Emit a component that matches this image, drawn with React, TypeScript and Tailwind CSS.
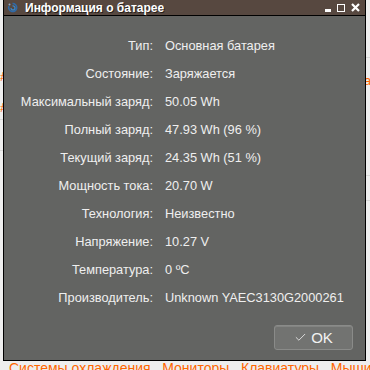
import { Check } from "lucide-react"

const rows: [string, string][] = [
  ["Тип:", "Основная батарея"],
  ["Состояние:", "Заряжается"],
  ["Максимальный заряд:", "50.05 Wh"],
  ["Полный заряд:", "47.93 Wh (96 %)"],
  ["Текущий заряд:", "24.35 Wh (51 %)"],
  ["Мощность тока:", "20.70 W"],
  ["Технология:", "Неизвестно"],
  ["Напряжение:", "10.27 V"],
  ["Температура:", "0 ºC"],
  ["Производитель:", "Unknown YAEC3130G2000261"],
]

const AppIcon = () => (
  <svg width="11" height="12" viewBox="0 0 11 12">
    <path d="M5.5 1.5 A4 4 0 1 1 2 4" fill="none" stroke="#2f6aa8" strokeWidth="1.6" />
    <path d="M5.5 4 A2 2 0 1 1 4 6" fill="none" stroke="#3d88c9" strokeWidth="1.2" />
    <circle cx="2.5" cy="2.5" r="1" fill="#8aa6c4" />
  </svg>
)

const BatteryDialog = () => {
  return (
    <div className="absolute left-[3px] top-0 w-[363px] h-[361px] flex flex-col border-x border-b border-black bg-[#636462]">
      {/* title bar */}
      <div className="h-[16px] bg-[#574840] border-b border-black flex items-center pl-[3px] pr-[5px]">
        <AppIcon />
        <div className="ml-[7px] text-[12px] font-bold text-white [text-shadow:1px_1px_0_#2a211c] leading-none">
          Информация о батарее
        </div>
        <div className="ml-auto flex items-center gap-[5px]">
          <div className="w-[6px] h-[3px] bg-white mt-[6px]" />
          <div className="w-[8px] h-[8px] border-[1.5px] border-white ml-[1px]" />
          <svg width="9" height="9" viewBox="0 0 9 9" className="ml-[1px]">
            <path d="M1 1 L8 8 M8 1 L1 8" stroke="white" strokeWidth="2.2" />
          </svg>
        </div>
      </div>

      <div className="flex-1 flex flex-col pt-[16px] text-[12.8px] text-[#efefef]">
        {rows.map(([label, value]) => (
          <div key={label} className="h-[28px] flex items-center">
            <div className="w-[149px] text-right">{label}</div>
            <div className="ml-[12px]">{value}</div>
          </div>
        ))}
        <div className="flex justify-end mt-[13px] pr-[12px]">
          <button className="w-[79px] h-[25px] rounded-[3px] border border-[#8a8b89] bg-[#727371] flex items-center justify-center gap-[4px] text-[15px] text-[#f2f2f2] shadow-[inset_0_1px_0_rgba(255,255,255,0.12)]">
            <Check size={13} strokeWidth={1.5} />
            <span className="leading-none">OK</span>
          </button>
        </div>
      </div>
    </div>
  )
}

const App = () => {
  return (
    <div className="relative w-[370px] h-[370px] overflow-hidden bg-[#eeeeee] font-['Liberation_Sans',Arial,sans-serif]">
      {/* page behind the dialog */}
      <div className="absolute left-0 top-[70px] text-[13px] text-[#ff6600] leading-none">#</div>
      <div className="absolute left-0 top-[101px] text-[13px] text-[#ff6600] leading-none">#</div>
      <div className="absolute left-0 top-[119px] w-[3px] h-px bg-[#d8d8d8]" />
      <div className="absolute left-0 top-[150px] w-[3px] h-px bg-[#d8d8d8]" />
      <div className="absolute right-0 top-[57px] w-[4px] h-px bg-[#d8d8d8]" />
      <div className="absolute right-0 top-[175px] w-[4px] h-px bg-[#d8d8d8]" />
      <div className="absolute right-0 top-[200px] w-[4px] h-px bg-[#d8d8d8]" />
      <div className="absolute left-[364px] top-[74px] text-[13px] text-[#ff6600] leading-none">а</div>
      <div className="absolute left-[9px] top-[361px] whitespace-nowrap text-[14px] leading-none text-[#333]">
        <span className="text-[#ff6600] underline">Системы охлаждения</span> ,{" "}
        <span className="text-[#ff6600] underline">Мониторы</span> ,{" "}
        <span className="text-[#ff6600] underline">Клавиатуры</span> ,{" "}
        <span className="text-[#ff6600] underline">Мыши</span>
      </div>

      <BatteryDialog />
    </div>
  )
}

export default App
